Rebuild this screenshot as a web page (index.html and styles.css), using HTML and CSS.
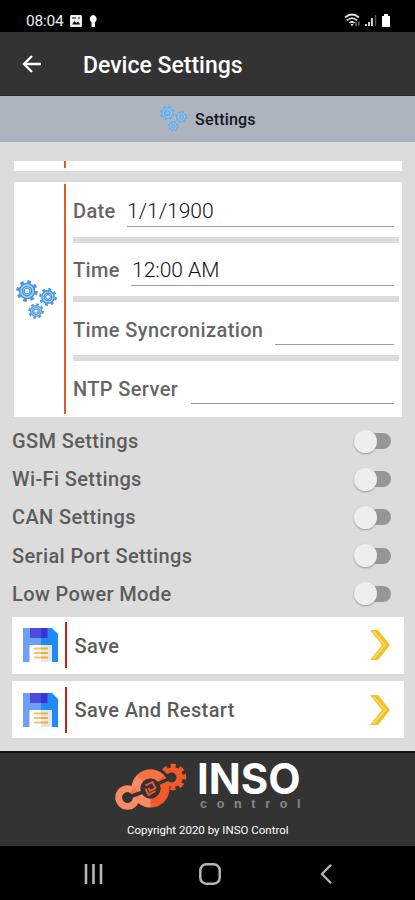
FILE: index.html
```html
<!DOCTYPE html>
<html lang="en">
<head>
<meta charset="utf-8">
<meta name="viewport" content="width=device-width">
<title>Device Settings</title>
<link rel="stylesheet" href="styles.css">
</head>
<body>
<svg width="0" height="0" class="defs">
  <defs>
    <g id="gear">
      <circle r="8.1" fill="none" stroke-width="2.4" stroke-dasharray="3.2 3.16" class="teeth"/>
      <circle r="5.2" fill="none" stroke-width="4"/>
      <circle r="5.2" fill="none" class="groove" stroke-width="1.2"/>
      <circle r="2.5" fill="none" stroke-width="1.2"/>
    </g>
    <g id="gears">
      <use href="#gear" transform="translate(11 11) scale(1.16)"/>
      <use href="#gear" transform="translate(32 17) scale(.96)"/>
      <use href="#gear" transform="translate(20 31) scale(.84)"/>
    </g>
    <g id="floppy">
      <path fill="#6e9ff8" d="M0 1h18v34H0z"/>
      <path fill="#218bf5" d="M18 1h11l6 6v28H18z"/>
      <path fill="#4d49df" d="M7 1h11v10H7z"/><path fill="#3835cf" d="M18 1h6.500v10H18z"/>
      <path fill="#fff" d="M6.500 18H18v17H6.500z"/><path fill="#e2e8ee" d="M18 18h11v17H18z"/>
      <path stroke="#fac45c" stroke-width="2" d="M11 21.500h7M11 26h7M11 30.500h7"/>
      <path stroke="#f2ac42" stroke-width="2" d="M18 21.500h7M18 26h7M18 30.500h7"/>
    </g>
    <g id="chevron">
      <path fill="#f2c02e" d="M0 0h8l12 15L8 30H0l12-15z"/>
      <path fill="none" stroke="#ffda58" stroke-width="1.800" d="M3.500 1.500 15 15 3.500 28.500"/>
    </g>
  </defs>
</svg>
<div class="screen">
  <div class="status">
    <span class="clock">08:04</span>
    <svg class="st-photo" width="12" height="12" viewBox="0 0 12 12"><rect width="12" height="12" rx="1.500" fill="#eee"/><path d="M2 9.500 4.500 6l2 2L8 6.500l2.300 3z" fill="#111"/><path d="M2 3h4M8 3h2" stroke="#111" stroke-width="1.200"/></svg>
    <svg class="st-bulb" width="8" height="12" viewBox="0 0 8 12"><path d="M4 0a4 4 0 0 1 2 7.200V12H2.500V7.200A4 4 0 0 1 4 0z" fill="#fff"/></svg>
    <svg class="st-right" width="48" height="15" viewBox="0 0 48 15">
      <g fill="none" stroke="#ddd" stroke-width="1.700"><path d="M1 4.500q7-6 14 0M3 7.300q5-4.500 10 0M5.500 10q2.500-2.500 5 0"/></g>
      <path d="M6.500 11h3L8 13.500z" fill="#ddd"/>
      <path d="M12 9v4M15 8.500v4" stroke="#777" stroke-width="1.300"/>
      <path d="M22 13v-2M25 13V9M28 13V5" stroke="#ccc" stroke-width="2"/><path d="M31.500 13V2" stroke="#555" stroke-width="1.500"/>
      <path d="M38 3h2V1h4v2h2v11h-8z" fill="#fff"/>
    </svg>
  </div>
  <header class="appbar">
    <svg width="20" height="18" viewBox="0 0 20 18"><path d="M19 9H2M10 1 2 9l8 8" fill="none" stroke="#fff" stroke-width="2.300"/></svg>
    <h1>Device Settings</h1>
  </header>
  <div class="tab">
    <svg class="tab-gears" width="30" height="28" viewBox="-1 -1 44 42"><use href="#gears"/></svg>
    <span>Settings</span>
  </div>
  <main class="content">
    <div class="strip"><i></i></div>
    <section class="card">
      <div class="card-icon"><svg class="card-gears" width="43" height="41" viewBox="0 0 43 41"><use href="#gears"/></svg></div>
      <div class="bar"></div>
      <div class="fields">
        <div class="field"><label class="l-date">Date</label><span class="value v-date">1/1/1900</span></div>
        <div class="field"><label class="l-time">Time</label><span class="value v-time">12:00 AM</span></div>
        <div class="field"><label class="l-sync">Time Syncronization</label><span class="value"></span></div>
        <div class="field"><label class="l-ntp">NTP Server</label><span class="value"></span></div>
      </div>
    </section>
    <div class="toggles">
      <div class="toggle"><span>GSM Settings</span><i class="switch"></i></div>
      <div class="toggle"><span>Wi-Fi Settings</span><i class="switch"></i></div>
      <div class="toggle"><span>CAN Settings</span><i class="switch"></i></div>
      <div class="toggle"><span>Serial Port Settings</span><i class="switch"></i></div>
      <div class="toggle"><span>Low Power Mode</span><i class="switch"></i></div>
    </div>
    <div class="action">
      <svg width="36" height="36" viewBox="0 0 36 36"><use href="#floppy"/></svg><i class="mark"></i><span>Save</span>
      <svg class="chev" width="20" height="30" viewBox="0 0 20 30"><use href="#chevron"/></svg>
    </div>
    <div class="action">
      <svg width="36" height="36" viewBox="0 0 36 36"><use href="#floppy"/></svg><i class="mark"></i><span>Save And Restart</span>
      <svg class="chev" width="20" height="30" viewBox="0 0 20 30"><use href="#chevron"/></svg>
    </div>
  </main>
  <footer class="footer">
    <div class="brand">
      <svg width="72" height="50" viewBox="0 0 72 50">
        <circle cx="58" cy="15" r="10" fill="#f1592a"/>
        <circle cx="58" cy="15" r="11" fill="none" stroke="#f1592a" stroke-width="4.500" stroke-dasharray="4.800 3.839" transform="rotate(-13 58 15)"/>
        <path d="M44 22 51 11" stroke="#333" stroke-width="9"/>
        <circle cx="35.500" cy="26.500" r="14.500" fill="none" stroke="#f1592a" stroke-width="9"/>
        <path d="M46 16.500A14.500 14.500 0 0 0 25 16.500" fill="none" stroke="#f47345" stroke-width="9"/>
        <path d="M25 16.500A14.500 14.500 0 0 0 35.500 41" fill="none" stroke="#f68b66" stroke-width="9"/>
        <circle cx="12.500" cy="35.500" r="8.700" fill="none" stroke="#f68b66" stroke-width="7"/>
        <path d="M17 27.500q4 3 3.500 8" fill="none" stroke="#f47345" stroke-width="6"/>
        <path d="M12.500 35.500 28 30" stroke="#333" stroke-width="3.500"/><circle cx="12.500" cy="35.500" r="5.200" fill="#333"/>
        <path d="M41 22.500 56 16" stroke="#333" stroke-width="3.500"/><circle cx="56.500" cy="15.500" r="5" fill="#333"/>
        <circle cx="35.500" cy="26.500" r="10" fill="#333"/>
        <path d="m30.500 23.500 7-3.500 3 6-5.500 3-1.500-3M30.500 26.500l3 6.500 7-4" fill="none" stroke="#f1592a" stroke-width="1.900"/>
      </svg>
      <div class="words"><div class="inso">INSO</div><div class="control">control</div></div>
    </div>
    <div class="copy">Copyright 2020 by INSO Control</div>
  </footer>
  <nav class="nav">
    <svg width="20" height="20" viewBox="0 0 20 20"><path d="M2 0v20M9.500 0v20M17 0v20" stroke="#b5b5b5" stroke-width="2.600"/></svg>
    <svg width="22" height="22" viewBox="0 0 22 22"><rect x="1.300" y="1.300" width="19.400" height="19.400" rx="6" fill="none" stroke="#b5b5b5" stroke-width="2.500"/></svg>
    <svg width="12" height="20" viewBox="0 0 12 20"><path d="M11 .8 2 10l9 9.200" fill="none" stroke="#b5b5b5" stroke-width="2.300"/></svg>
  </nav>
</div>
</body>
</html>
```
FILE: styles.css
```css
* { box-sizing: border-box; margin: 0; padding: 0; }
body { font-family: Roboto, "Liberation Sans", sans-serif; background: #000; }
svg { display: block; flex: none; }
.defs { position: absolute; }
.screen { width: 415px; height: 900px; display: flex; flex-direction: column; overflow: hidden; white-space: nowrap; }

.status { height: 32px; background: #000; display: flex; align-items: center; padding: 9px 23px 0 26px; color: #eee; }
.clock { font-size: 15.5px; width: 44px; letter-spacing: -.2px; }
.st-bulb { margin-left: 7px; }
.st-right { margin-left: auto; }

.appbar { height: 64px; background: #333; display: flex; align-items: center; padding-left: 22px; border-bottom: 1px solid #292929; }
.appbar h1 { margin-left: 41px; margin-top: 3px; font-size: 23px; font-weight: 500; color: #fff; }

.tab { height: 46px; background: #adb4bd; display: flex; align-items: center; padding-left: 159px; font-size: 16px; font-weight: 500; color: #15171b; }
.tab span { margin-left: 6px; letter-spacing: .2px; }
.tab-gears { stroke: #62aef0; }
.tab-gears .groove { stroke: #a5d0f5; }

.content { height: 609px; background: #dcdcdc; padding: 18.500px 11px 0 12px; }
.strip { height: 10px; margin: 0 2px; background: #fff; padding-left: 50px; }
.strip i { display: block; width: 2px; height: 7px; background: #e35a25; }
.card { margin: 11px 2px 0; height: 235px; background: #fff; display: flex; padding: 2px 3px 3px 0; }
.card-icon { width: 50px; padding: 96px 0 0 2px; }
.card-gears { stroke: #4a97da; }
.groove { stroke: #a8d3f7; }
.bar { width: 2px; background: #e35a25; }
.fields { flex: 1; padding-left: 7px; }
.field { height: 59.300px; display: flex; align-items: flex-start; border-bottom: 6.500px solid #dcdcdc; padding-right: 5px; }
.field:last-child { border-bottom: 0; }
.field label { font-size: 20px; font-weight: 500; color: #666; line-height: 24px; margin-top: 15.600px; flex: none; letter-spacing: .37px; }
.l-date { width: 54px; }
.l-time { width: 58px; }
.l-sync { width: 202px; }
.l-ntp { width: 118px; }
.value { flex: 1; height: 43px; padding-top: 15.600px; border-bottom: 1.500px solid #999; font-size: 21px; line-height: 24px; color: #111; font-weight: 300; }
.v-time { padding-left: 1px; }

.toggles { padding-top: 5.500px; height: 200px; }
.toggle { height: 38.200px; display: flex; align-items: center; justify-content: space-between; padding-right: 13px; font-size: 20px; font-weight: 500; color: #5c5c5c; letter-spacing: .37px; }
.switch { width: 33px; height: 16px; border-radius: 8px; background: #969696; display: flex; align-items: center; }
.switch::before { content: ""; width: 23px; height: 23px; margin-left: -4px; flex: none; border-radius: 50%; background: #eee; box-shadow: 0 1px 2px #999; }

.action { height: 57px; margin-bottom: 7.500px; background: #fff; display: flex; align-items: center; padding: 0 14px 0 11px; font-size: 20px; font-weight: 500; color: #5c5c5c; }
.action span { margin-left: 7.500px; margin-top: 1px; letter-spacing: .4px; }
.mark { width: 2px; height: 46px; margin-left: 6px; background: #cf1d1d; }
.chev { margin-left: auto; }

.footer { height: 95px; background: #333; border-top: 2px solid #111; display: flex; flex-direction: column; }
.brand { display: flex; padding: 9px 0 0 115px; height: 70px; }
.words { margin-left: 10px; }
.inso { margin-top: -1px; height: 37px; font-family: Inter, "Liberation Sans", sans-serif; font-weight: 700; font-size: 42px; line-height: 36px; color: #fff; }
.control { margin-left: 3px; font-family: "Liberation Sans", sans-serif; font-weight: 700; font-size: 12.500px; line-height: 12px; letter-spacing: 9.700px; color: #888; }
.copy { padding-left: 127px; font-size: 11.500px; line-height: 14px; color: #fff; }

.nav { height: 54px; background: #000; display: flex; align-items: center; padding: 2px 0 0 84px; }
.nav svg:nth-child(2) { margin-left: 95px; }
.nav svg:nth-child(3) { margin-left: 99px; }
```
